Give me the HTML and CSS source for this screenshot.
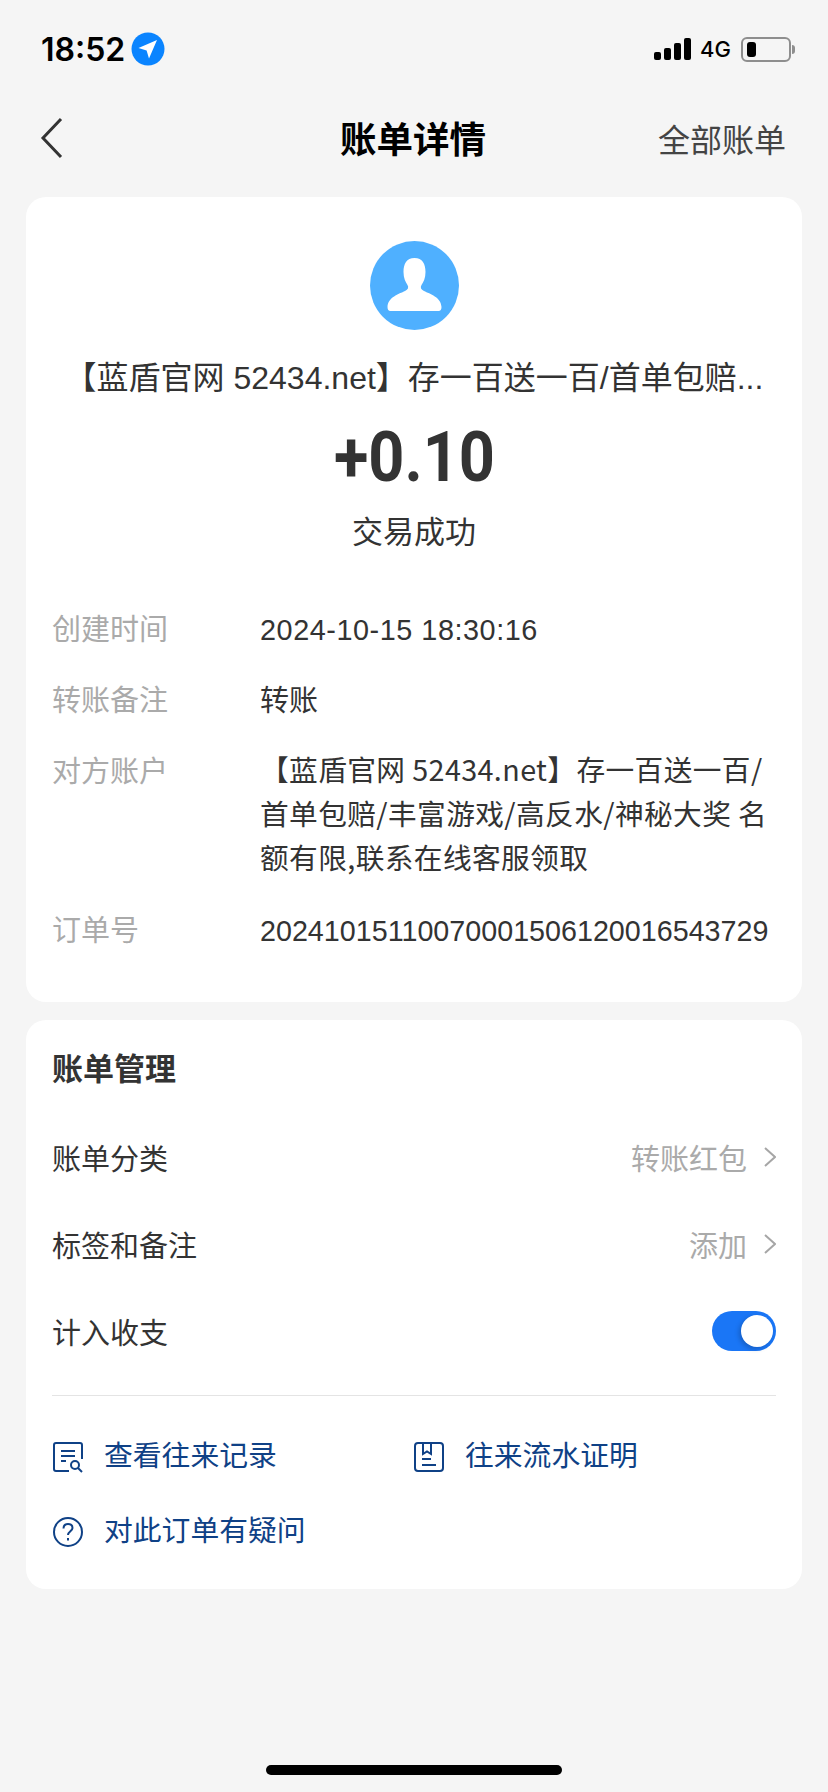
FILE: index.html
```html
<!DOCTYPE html>
<html lang="zh-CN">
<head>
    <meta charset="UTF-8">
    <meta name="viewport" content="width=device-width, initial-scale=1.0">
    <title>账单详情</title>
    <link rel="stylesheet" href="styles.css">
</head>
<body>
    <div class="page">
        <!-- Status bar -->
        <div class="status-bar">
            <div class="status-left">
                <span class="clock">18:52</span>
                <svg class="loc-icon" width="34" height="34" viewBox="0 0 34 34">
                    <circle cx="17" cy="17" r="16.5" fill="#0a84ff"/>
                    <path d="M26 8 L7.5 16 L15.6 18.4 L18 26.5 Z" fill="#fff"/>
                </svg>
            </div>
            <div class="status-right">
                <div class="signal">
                    <span class="bar bar-1"></span>
                    <span class="bar bar-2"></span>
                    <span class="bar bar-3"></span>
                    <span class="bar bar-4"></span>
                </div>
                <span class="net">4G</span>
                <div class="battery">
                    <div class="battery-body"><span class="battery-level"></span></div>
                    <span class="battery-cap"></span>
                </div>
            </div>
        </div>

        <!-- Nav bar -->
        <div class="nav-bar">
            <svg class="back-icon" width="24" height="42" viewBox="0 0 24 42">
                <path d="M21 2 L3 21 L21 40" fill="none" stroke="#333" stroke-width="3"/>
            </svg>
            <h1 class="nav-title">账单详情</h1>
            <span class="nav-link">全部账单</span>
        </div>

        <!-- Bill summary -->
        <section class="card summary-card">
            <div class="summary">
                <svg class="avatar" width="89" height="89" viewBox="0 0 89 89">
                    <circle cx="44.5" cy="44.5" r="44.5" fill="#4fb0ff"/>
                    <path d="M44.5 17 C36.5 17 33.5 23 33.5 31 C33.5 37 35.5 41 37.5 44 C39 46.5 38 48.5 35 50 C29 53 18 56 17.5 66 C17.5 68.5 18.5 70 20.5 70 L68.5 70 C70.500 70 71.500 68.5 71.500 66 C71 56 60 53 54 50 C51 48.500 50 46.500 51.500 44 C53.500 41 55.500 37 55.500 31 C55.500 23 52.500 17 44.500 17 Z" fill="#fff"/>
                </svg>
                <p class="payee">【蓝盾官网 52434.net】存一百送一百/首单包赔...</p>
                <div class="amount">+0.10</div>
                <div class="state">交易成功</div>
            </div>
            <dl class="details">
                <div class="detail-row">
                    <dt>创建时间</dt>
                    <dd class="date">2024-10-15 18:30:16</dd>
                </div>
                <div class="detail-row">
                    <dt>转账备注</dt>
                    <dd>转账</dd>
                </div>
                <div class="detail-row">
                    <dt>对方账户</dt>
                    <dd class="account">【蓝盾官网 52434.net】存一百送一百/首单包赔/丰富游戏/高反水/神秘大奖 名额有限,联系在线客服领取</dd>
                </div>
                <div class="detail-row">
                    <dt>订单号</dt>
                    <dd class="order-no">20241015110070001506120016543729</dd>
                </div>
            </dl>
        </section>

        <!-- Bill management -->
        <section class="card manage-card">
            <h2 class="manage-title">账单管理</h2>
            <div class="manage-row">
                <span>账单分类</span>
                <span class="row-value">转账红包
                    <svg class="chevron" width="14" height="22" viewBox="0 0 14 22"><path d="M3 2 L13 11 L3 20" fill="none" stroke="#a6a6a6" stroke-width="2"/></svg>
                </span>
            </div>
            <div class="manage-row">
                <span>标签和备注</span>
                <span class="row-value">添加
                    <svg class="chevron" width="14" height="22" viewBox="0 0 14 22"><path d="M3 2 L13 11 L3 20" fill="none" stroke="#a6a6a6" stroke-width="2"/></svg>
                </span>
            </div>
            <div class="manage-row">
                <span>计入收支</span>
                <div class="toggle"><span class="knob"></span></div>
            </div>
            <div class="actions">
                <div class="action">
                    <svg width="32" height="32" viewBox="0 0 32 32" fill="none" stroke="#0f4186" stroke-width="2">
                        <path d="M30 18 V4 Q30 2 28 2 H4 Q2 2 2 4 V28 Q2 30 4 30 H17"/>
                        <path d="M9 10 H23 M9 15 H23 M9 20 H14"/>
                        <circle cx="23" cy="24" r="4"/>
                        <path d="M26 27 L30 31"/>
                    </svg>
                    <span>查看往来记录</span>
                </div>
                <div class="action">
                    <svg width="32" height="32" viewBox="0 0 32 32" fill="none" stroke="#0f4186" stroke-width="2">
                        <rect x="2" y="2" width="28" height="28" rx="3"/>
                        <path d="M10 2 V13 L14 10.500 L18 13 V2"/>
                        <path d="M9 18 H18 M9 24 H23"/>
                    </svg>
                    <span>往来流水证明</span>
                </div>
                <div class="action">
                    <svg width="32" height="32" viewBox="0 0 32 32" fill="none" stroke="#0f4186" stroke-width="2">
                        <circle cx="16" cy="16" r="14"/>
                        <path d="M11.500 12.500 C11.500 9.500 13.500 8 16 8 C18.500 8 20.500 9.500 20.500 12 C20.500 15 16 15.500 16 19"/>
                        <path d="M16 22 V24.500"/>
                    </svg>
                    <span>对此订单有疑问</span>
                </div>
            </div>
        </section>

        <div class="home-bar"></div>
    </div>
</body>
</html>
```

FILE: styles.css
```css
* {
    margin: 0;
    padding: 0;
    box-sizing: border-box;
}

body {
    font-family: "Liberation Sans", "Noto Sans CJK SC", sans-serif;
    background: #f5f5f5;
    color: #333;
}

.page {
    display: flex;
    flex-direction: column;
    height: 1792px;
    padding: 0 26px;
    overflow: hidden;
}

/* Status bar */
.status-bar {
    display: flex;
    align-items: center;
    justify-content: space-between;
    height: 98px;
    padding: 0 7px 0 15px;
    color: #000;
}

.status-left {
    display: flex;
    align-items: center;
    gap: 6px;
}

.clock {
    font-family: Inter, sans-serif;
    font-size: 32px;
    font-weight: 600;
}

.status-right {
    display: flex;
    align-items: center;
}

.signal {
    display: flex;
    align-items: flex-end;
    gap: 3px;
    height: 22px;
}

.bar {
    width: 7px;
    background: #000;
    border-radius: 2px;
}

.bar-1 { height: 8px; }
.bar-2 { height: 12px; }
.bar-3 { height: 17px; }
.bar-4 { height: 22px; }

.net {
    font-family: Inter, sans-serif;
    font-size: 22px;
    font-weight: 500;
    margin: 0 10px 0 9px;
}

.battery {
    display: flex;
    align-items: center;
}

.battery-body {
    width: 50px;
    height: 25px;
    padding: 3px 4px;
    border: 2px solid #8e8e8e;
    border-radius: 6px;
}

.battery-level {
    display: block;
    width: 9px;
    height: 100%;
    background: #000;
    border-radius: 3px;
}

.battery-cap {
    width: 3px;
    height: 9px;
    margin-left: 1px;
    background: #8e8e8e;
    border-radius: 0 3px 3px 0;
}

/* Nav bar */
.nav-bar {
    display: grid;
    grid-template-columns: 1fr auto 1fr;
    align-items: center;
    height: 99px;
    padding: 0 16px 20px 14px;
}

.nav-title {
    font-size: 36.5px;
    font-weight: 700;
    color: #000;
}

.nav-link {
    justify-self: end;
    font-size: 32px;
    color: #444;
}

/* Cards */
.card {
    background: #fff;
    border-radius: 20px;
}

.summary-card {
    height: 805px;
    padding: 44px 26px 0;
}

.summary {
    display: flex;
    flex-direction: column;
    align-items: center;
}

.payee {
    margin-top: 27px;
    font-size: 32px;
    line-height: 42px;
    white-space: nowrap;
}

.amount {
    margin-top: 18px;
    font-family: Roboto, sans-serif;
    font-size: 70px;
    font-weight: 700;
    line-height: 80px;
    transform: scaleX(0.9);
}

.state {
    margin-top: 14px;
    font-size: 31px;
    line-height: 44px;
}

/* Detail rows */
.details {
    margin-top: 53px;
    display: flex;
    flex-direction: column;
    gap: 27px;
}

.detail-row {
    display: flex;
    font-size: 29px;
    line-height: 44px;
}

.detail-row dt {
    flex: none;
    width: 208px;
    color: #aaa;
}

.detail-row dd {
    flex: 1;
    word-break: break-all;
}

.detail-row .date {
    font-size: 28.8px;
    letter-spacing: 0.55px;
}

/* Noto sits lower in the line than the labels, pull it back up */
.detail-row .account {
    margin: -3px 0 3px;
    font-family: "Noto Sans CJK SC", sans-serif;
    font-size: 28.7px;
    letter-spacing: 0.4px;
}

.detail-row .order-no {
    font-size: 28.7px;
}

/* Manage card */
.manage-card {
    height: 569px;
    margin-top: 18px;
    padding: 28px 26px 0;
}

.manage-title {
    margin-bottom: 21px;
    font-size: 31px;
    font-weight: 700;
    line-height: 44px;
}

.manage-row {
    display: flex;
    align-items: center;
    justify-content: space-between;
    height: 87px;
    font-size: 29px;
}

.row-value {
    display: flex;
    align-items: center;
    gap: 15px;
    color: #aaa;
}

.toggle {
    display: flex;
    align-items: center;
    justify-content: flex-end;
    width: 64px;
    height: 40px;
    padding-right: 3px;
    background: #1a76f6;
    border-radius: 20px;
}

.knob {
    width: 32px;
    height: 32px;
    background: #fff;
    border-radius: 50%;
    box-shadow: -2px 2px 5px rgba(0, 0, 0, 0.2);
}

.actions {
    display: grid;
    grid-template-columns: 361px 1fr;
    row-gap: 32px;
    margin-top: 21px;
    padding-top: 39px;
    border-top: 1px solid #e4e4e4;
}

.action {
    display: flex;
    align-items: center;
    gap: 20px;
    font-size: 28.8px;
    line-height: 43px;
    color: #0f4186;
}

/* Home indicator */
.home-bar {
    flex: none;
    width: 296px;
    height: 10px;
    margin: auto auto 17px;
    background: #000;
    border-radius: 5px;
}
```
